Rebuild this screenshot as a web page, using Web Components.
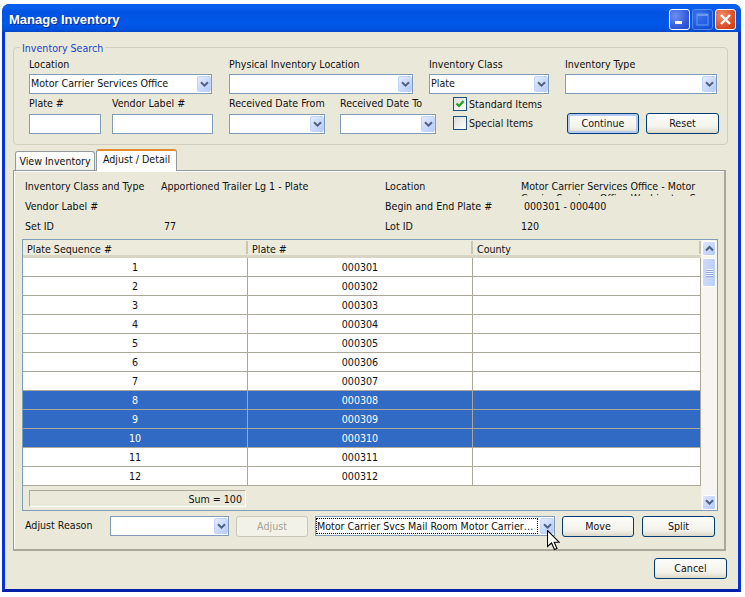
<!DOCTYPE html>
<html><head><meta charset="utf-8"><title>Manage Inventory</title>
<style>
html,body{margin:0;padding:0;background:#fff;}
body{padding:4px 0 0 2px;font:10.6px/13px "DejaVu Sans Condensed","DejaVu Sans",sans-serif;font-stretch:condensed;color:#111;}
</style></head><body>
<x-window title="Manage Inventory">
  <x-group legend="Inventory Search">
    <x-row>
      <x-field label="Location" style="width:183px;--lg:2px"><x-combo value="Motor Carrier Services Office"></x-combo></x-field>
      <x-field label="Physical Inventory Location" style="width:184px;margin-left:17px;--lg:2px"><x-combo></x-combo></x-field>
      <x-field label="Inventory Class" style="width:120px;margin-left:16px;--lg:2px"><x-combo value="Plate"></x-combo></x-field>
      <x-field label="Inventory Type" style="width:152px;margin-left:16px;--lg:2px"><x-combo></x-combo></x-field>
    </x-row>
    <x-row style="margin-top:3px">
      <x-field label="Plate #" style="width:72px;--lg:3px"><x-text></x-text></x-field>
      <x-field label="Vendor Label #" style="width:101px;margin-left:11px;--lg:3px"><x-text></x-text></x-field>
      <x-field label="Received Date From" style="width:96px;margin-left:16px;--lg:3px"><x-combo></x-combo></x-field>
      <x-field label="Received Date To" style="width:96px;margin-left:15px;--lg:3px"><x-combo></x-combo></x-field>
      <x-checks style="margin-left:17px;width:114px"><x-check checked>Standard Items</x-check><x-check>Special Items</x-check></x-checks>
      <x-btn primary style="width:72px;margin-left:0;align-self:flex-end">Continue</x-btn>
      <x-btn style="width:73px;margin-left:7px;align-self:flex-end">Reset</x-btn>
    </x-row>
  </x-group>
  <x-tabs>
    <x-tab>View Inventory</x-tab>
    <x-tab active>Adjust / Detail</x-tab>
  </x-tabs>
  <x-panel>
    <x-info></x-info>
    <x-grid></x-grid>
    <x-row style="margin-top:5px;padding-left:3px;align-items:flex-start">
      <x-rowlabel style="width:85px">Adjust Reason</x-rowlabel>
      <x-combo style="width:119px"></x-combo>
      <x-btn disabled style="width:72px;margin-left:7px">Adjust</x-btn>
      <x-combo focused value="Motor Carrier Svcs Mail Room Motor Carrier…" style="width:240px;margin-left:7px"></x-combo>
      <x-btn style="width:72px;margin-left:7px">Move</x-btn>
      <x-btn style="width:73px;margin-left:8px">Split</x-btn>
    </x-row>
  </x-panel>
  <x-row style="justify-content:flex-end;margin-top:7px;padding-right:11px"><x-btn style="width:73px">Cancel</x-btn></x-row>
  <x-cursor></x-cursor>
</x-window>
<script>
const chev='<svg width="9" height="7" viewBox="0 0 9 7"><polyline points="1,1.2 4.5,4.7 8,1.2" fill="none" stroke="#4d6185" stroke-width="2"/></svg>';
function def(name,css,html,init){
  customElements.define(name,class extends HTMLElement{
    connectedCallback(){
      if(this.shadowRoot)return;
      const s=this.attachShadow({mode:'open'});
      const h=typeof html==='function'?html(this):html;
      s.innerHTML='<style>'+css+'</style>'+h;
    }
  });
}
def('x-window',`
:host{display:block;position:relative;width:733px;height:585px;box-sizing:content-box;border:3px solid #0831d9;border-top:0;border-bottom-color:#0020a8;border-radius:8px 8px 0 0;background:#eae8d8;}
.bar{height:28px;margin:0 -3px;box-sizing:border-box;border-radius:7px 7px 0 0;background:linear-gradient(#0a5ae6 0,#0a62f0 3px,#0053e2 8px,#0058ea 20px,#0050dc 26px,#0345c4 28px);display:flex;align-items:center;padding:3px 5px 0 7px;}
.t{flex:1;color:#fff;font:bold 13px/16px "Liberation Sans",Arial,sans-serif;text-shadow:1px 1px 0 #0a2a90;margin-top:1px;}
.b{width:21px;height:21px;box-sizing:border-box;border:1px solid #fff;border-radius:3px;margin-left:2px;display:flex;align-items:center;justify-content:center;background:radial-gradient(circle at 30% 30%,#6d8ff0,#2c55d8 70%,#2046c8);}
.b.off{opacity:.55;border-color:#9fb6f0;}
.b.x{background:radial-gradient(circle at 30% 30%,#ef8e6c,#d8491f 70%,#c23a14);}
.c{height:557px;}
`,e=>`<div class="bar"><div class="t">${e.getAttribute('title')}</div>
<div class="b"><svg width="13" height="13"><rect x="2" y="8" width="7" height="3" fill="#fff"/></svg></div>
<div class="b off"><svg width="13" height="13"><rect x="1" y="1" width="11" height="11" fill="none" stroke="#c0d0f8"/><rect x="1" y="1" width="11" height="2" fill="#c0d0f8"/></svg></div>
<div class="b x"><svg width="13" height="13"><path d="M2 2L11 11M11 2L2 11" stroke="#fff" stroke-width="2.4"/></svg></div></div>
<div class="c"><slot></slot></div>`);
def('x-group',`
:host{display:block;margin:8px 0 0 8px;width:715px;height:105px;}
fieldset{box-sizing:border-box;margin:0;height:105px;padding:3px 0 0 15px;border:1px solid #d0cfbc;border-radius:4px;}
legend{color:#1a3fd0;padding:2px 2px 0;margin-left:-9px;line-height:13px;}
`,e=>`<fieldset><legend>${e.getAttribute('legend')}</legend><slot></slot></fieldset>`);
def('x-row',`:host{display:flex;align-items:flex-start;}`,'<slot></slot>');
def('x-field',`
:host{display:block;flex:none;}
.l{height:14px;line-height:12px;margin-bottom:var(--lg,2px);white-space:nowrap;}
`,e=>`<div class="l">${e.getAttribute('label')}</div><slot></slot>`);
def('x-combo',`
:host{display:block;height:20px;box-sizing:border-box;border:1px solid #7f9db9;background:#fff;flex:none;position:relative;}
.w{display:flex;height:18px;align-items:center;}
.v{flex:1;margin-left:0;white-space:nowrap;overflow:hidden;line-height:12px;height:16px;box-sizing:border-box;border:1px solid transparent;min-width:0;}
.f .v{border:1px dotted #000;margin-right:2px;line-height:14px;}
.a{flex:none;width:14px;height:16px;box-sizing:border-box;border:1px solid #c4d3f8;border-radius:2px;background:linear-gradient(135deg,#e3ebfe,#b6cbf8);display:flex;align-items:center;justify-content:center;}
`,e=>`<div class="w ${e.hasAttribute('focused')?'f':''}"><div class="v">${e.getAttribute('value')||''}</div><div class="a">${chev}</div></div>`);
def('x-text',`:host{display:block;height:20px;box-sizing:border-box;border:1px solid #7f9db9;background:#fff;}`,'');
def('x-checks',`:host{display:flex;flex-direction:column;gap:5px;flex:none;}`,'<slot></slot>');
def('x-check',`
:host{display:flex;align-items:center;height:14px;}
.b{width:14px;height:14px;box-sizing:border-box;border:1px solid #1c5180;background:linear-gradient(135deg,#dcdcd7,#fff);margin-right:2px;flex:none;display:flex;align-items:center;justify-content:center;}
`,e=>`<div class="b">${e.hasAttribute('checked')?'<svg width="12" height="12" viewBox="0 0 12 12"><path d="M2.5 5.5L5 8L9.5 3" fill="none" stroke="#21a121" stroke-width="2.2"/></svg>':''}</div><slot></slot>`);
def('x-btn',`
:host{display:flex;align-items:center;justify-content:center;height:21px;box-sizing:border-box;border:1px solid #003c74;border-radius:3px;background:linear-gradient(#fdfdfb,#f3f2ea 70%,#dcd8c9);flex:none;color:#111;}
:host([primary]){box-shadow:inset 0 0 0 2px #b5cbf3;}
:host([disabled]){border-color:#c9c7ba;background:#f3f2e9;color:#a3a294;}
`,'<slot></slot>');
def('x-tabs',`:host{display:flex;align-items:flex-end;height:21px;margin:4px 0 0 10px;position:relative;z-index:1;}`,'<slot></slot>');
def('x-tab',`
:host{display:flex;align-items:center;justify-content:center;width:80px;height:19px;box-sizing:border-box;border:1px solid #919b9c;border-bottom:0;border-radius:3px 3px 0 0;background:linear-gradient(#fff,#f1f0e8);margin-right:1px;}
:host([active]){width:81px;height:22px;margin-bottom:-1px;margin-right:0;background:#fff;border-top:2px solid #e68b2c;padding-bottom:3px;}
`,'<slot></slot>');
def('x-panel',`:host{display:block;margin-left:8px;width:713px;height:381px;box-sizing:border-box;border:1px solid #919b9c;border-right:2px solid #aca899;border-bottom:2px solid #aca899;padding:5px 0 0 8px;box-shadow:inset 1px 1px 0 #fff;}`,'<slot></slot>');
def('x-info',`
:host{display:grid;grid-template-columns:136px 224px 136px 1fr;grid-auto-rows:20px;margin-left:3px;height:60px;margin-bottom:3px;}
div{line-height:20px;height:20px;white-space:nowrap;}
.w{white-space:normal;line-height:12px;overflow:hidden;padding-top:4px;width:180px;box-sizing:border-box;height:20px;}
.p{padding-left:3px;}
`,`<div>Inventory Class and Type</div><div>Apportioned Trailer Lg 1 - Plate</div><div>Location</div><div class="w">Motor Carrier Services Office - Motor Carrier Services Office Washington S</div>
<div>Vendor Label #</div><div></div><div>Begin and End Plate #</div><div class="p">000301 - 000400</div>
<div>Set ID</div><div class="p">77</div><div>Lot ID</div><div>120</div>`);
def('x-grid',`
:host{display:flex;width:696px;height:272px;box-sizing:border-box;border:1px solid #7f9db9;background:#ebe9d9;}
.m{width:678px;flex:none;display:flex;flex-direction:column;}
.h,.r{display:grid;grid-template-columns:225px 225px 1fr;}
.h{height:18px;box-sizing:border-box;border-bottom:3px solid #d8d5c4;background:#ecebdc;}
.h div{padding-left:4px;line-height:18px;height:15px;border-right:2px solid transparent;border-image:linear-gradient(#ecebdc 2px,#c9c7b4 2px,#c9c7b4 13px,#ecebdc 13px) 1;}
.r{height:19px;background:#fff;}
.r div{box-sizing:border-box;height:19px;border:solid #aca899;border-width:0 1px 1px 0;text-align:center;line-height:18px;}
.r.s{background:#316ac5;color:#fff;}
.f{flex:1;padding:4px 0 0 6px;}
.sum{width:217px;height:17px;box-sizing:border-box;border:1px solid;border-color:#aca899 #fff #fff #aca899;text-align:right;padding-right:3px;line-height:17px;}
.sb{width:16px;flex:none;display:flex;flex-direction:column;background:#f6f5ef;padding:1px 0 0 1px;box-sizing:border-box;}
.u,.d,.t{width:14px;box-sizing:border-box;border:1px solid #fff;border-radius:2px;background:linear-gradient(135deg,#dde7fe,#b4c9f8);display:flex;align-items:center;justify-content:center;}
.u,.d{height:15px;}
.t{height:29px;margin-top:2px;flex-direction:column;gap:1px;background:linear-gradient(90deg,#cdd9fb,#bcd0f9);}
.t i{display:block;width:7px;height:1px;background:#eef3ff;box-shadow:0 1px 0 #8fa8e0;}
.sp{flex:1;}
`,()=>{let r='';for(let i=1;i<=12;i++){r+=`<div class="r ${i>=8&&i<=10?'s':''}"><div>${i}</div><div>000${300+i}</div><div></div></div>`;}
return `<div class="m"><div class="h"><div>Plate Sequence #</div><div>Plate #</div><div>County</div></div>${r}<div class="f"><div class="sum">Sum = 100</div></div></div>
<div class="sb"><div class="u"><svg width="9" height="7" viewBox="0 0 9 7"><polyline points="1,5.5 4.5,2 8,5.5" fill="none" stroke="#4d6185" stroke-width="2"/></svg></div><div class="t"><i></i><i></i><i></i><i></i></div><div class="sp"></div><div class="d">${chev}</div></div>`});
def('x-rowlabel',`:host{display:block;flex:none;line-height:18px;white-space:nowrap;}`,'<slot></slot>');
def('x-cursor',`:host{position:absolute;left:542px;top:526px;width:13px;height:21px;}svg{display:block}`,'<svg width="13" height="21" viewBox="0 0 13 21"><path d="M.5.5V16.5L4.5 13L7.5 19.5L10 18.5L7.2 12.2H12.2Z" fill="#fff" stroke="#000" stroke-width="1.1"/></svg>');
</script>
</body></html>
